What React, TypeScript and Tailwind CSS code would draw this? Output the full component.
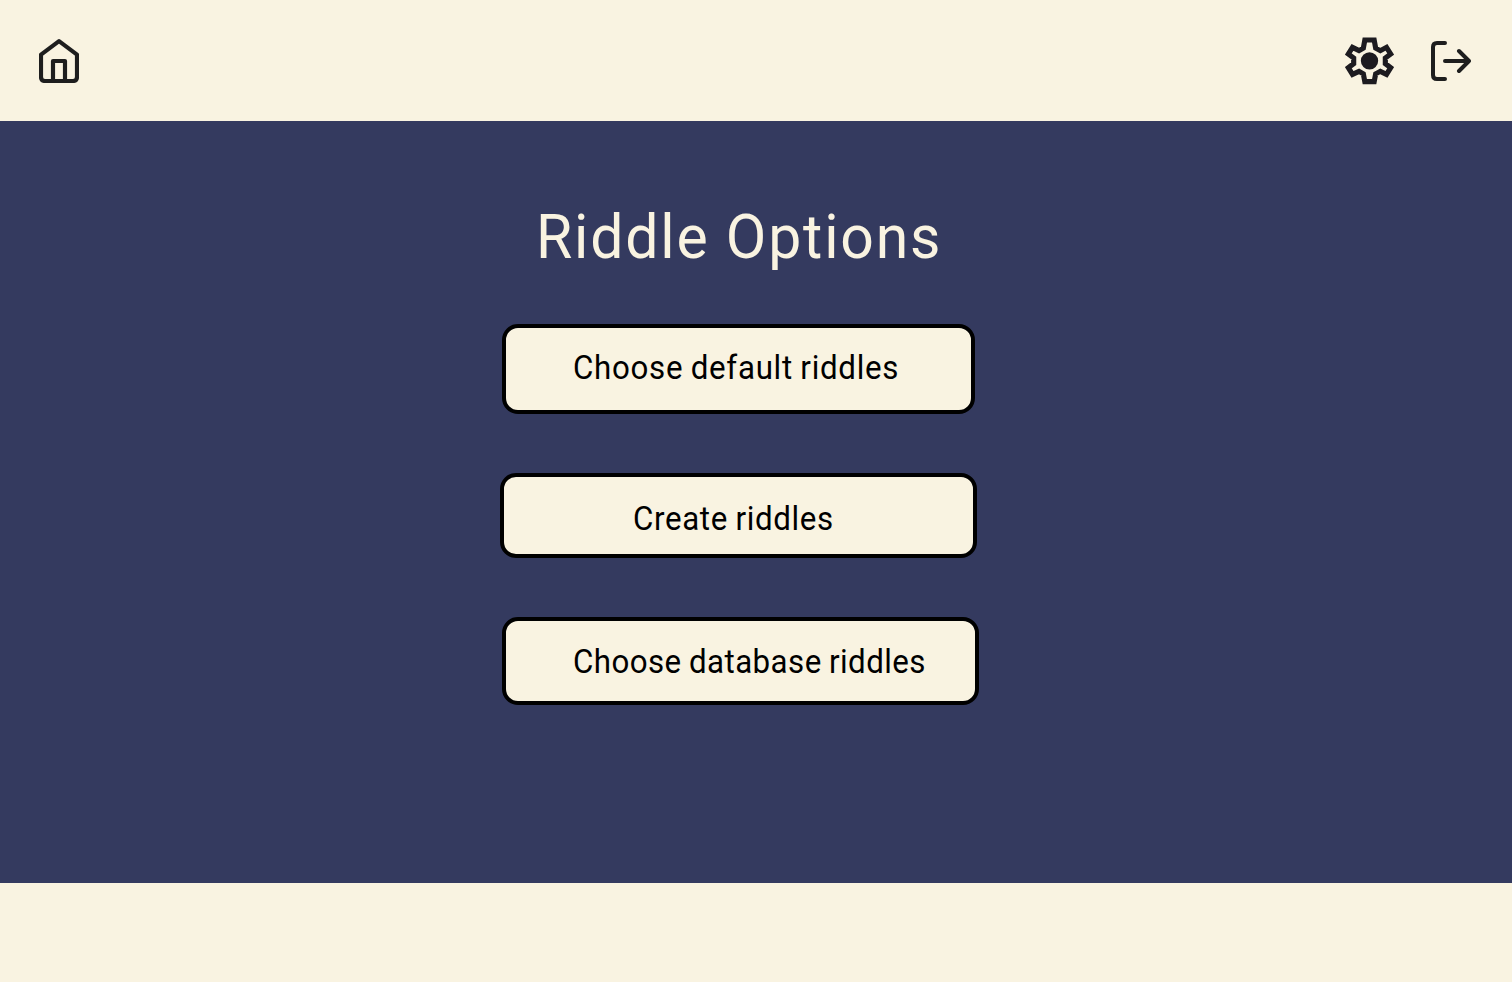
import type { ReactNode } from "react";

function HomeIcon() {
  return (
    <svg width="40" height="44" viewBox="57 57 120 132" fill="none" stroke="#1e1e1e" strokeWidth="12.5" strokeLinejoin="round" strokeLinecap="round">
      <path d="M63 104 L117 63.5 L171 104 V171 Q171 183 159 183 H75 Q63 183 63 171 Z" />
      <path d="M99 183 V123 H135 V183" />
    </svg>
  );
}

function GearIcon() {
  return (
    <svg width="49" height="48" viewBox="45 51 147 144" fill="none" stroke="#1d1b20" strokeWidth="15.5">
      <path d="M104.500 60 H132.500 L137 84.500 L151 92 L169.500 82 L182 102 L166 114 V131 L182 143 L169.500 163 L151 154 L137 161.500 L132.500 185 H104.500 L100 161.500 L87 154 L67.500 163 L55 143 L71 131 V114 L55 102 L67.500 82 L87 92 L100 84.500 Z" />
      <circle cx="118.5" cy="122.5" r="26" fill="#1d1b20" stroke="none" />
    </svg>
  );
}

function LogoutIcon() {
  return (
    <svg width="40" height="40" viewBox="303 63 120 120" fill="none" stroke="#1e1e1e" strokeWidth="12" strokeLinejoin="round" strokeLinecap="round">
      <path d="M345 69 H321 Q309 69 309 81 V165 Q309 177 321 177 H345" />
      <path d="M345 123 H417 M387 93 L417 123 L387 153" />
    </svg>
  );
}

function OptionButton({ className, children }: { className: string; children: ReactNode }) {
  return (
    <button
      className={`flex items-start rounded-2xl border-4 border-black bg-[#f9f3e1] text-left text-[34px] leading-10 whitespace-nowrap text-black ${className}`}
    >
      <span className="inline-block origin-left scale-x-[0.92] [word-spacing:-1px]">{children}</span>
    </button>
  );
}

export default function App() {
  return (
    <div className="flex h-[982px] w-[1512px] flex-col bg-[#f9f3e1] font-['Roboto',sans-serif]">
      <header className="flex h-[121px] shrink-0 items-center justify-between pr-[41px] pl-[39px]">
        <button aria-label="Home"><HomeIcon /></button>
        <div className="flex items-center gap-[37px]">
          <button aria-label="Settings"><GearIcon /></button>
          <button aria-label="Log out"><LogoutIcon /></button>
        </div>
      </header>
      <main className="flex h-[762px] shrink-0 flex-col items-start bg-[#343a5f] pl-[500px]">
        <h1 className="mt-[80px] ml-[36px] h-[72px] origin-left scale-x-[0.95] text-[62px] leading-[72px] tracking-[1.9px] whitespace-nowrap text-[#f9f3e1]">
          Riddle Options
        </h1>
        <OptionButton className="mt-[51px] ml-[2px] h-[90px] w-[472.5px] pt-[19px] pl-[67px] tracking-[0.76px]">
          Choose default riddles
        </OptionButton>
        <OptionButton className="mt-[59px] h-[85px] w-[477px] pt-[21px] pl-[129px] tracking-[0.7px]">
          Create riddles
        </OptionButton>
        <OptionButton className="mt-[59px] ml-[2px] h-[88px] w-[477px] pt-[20px] pl-[67px] tracking-[0.48px]">
          Choose database riddles
        </OptionButton>
      </main>
    </div>
  );
}
